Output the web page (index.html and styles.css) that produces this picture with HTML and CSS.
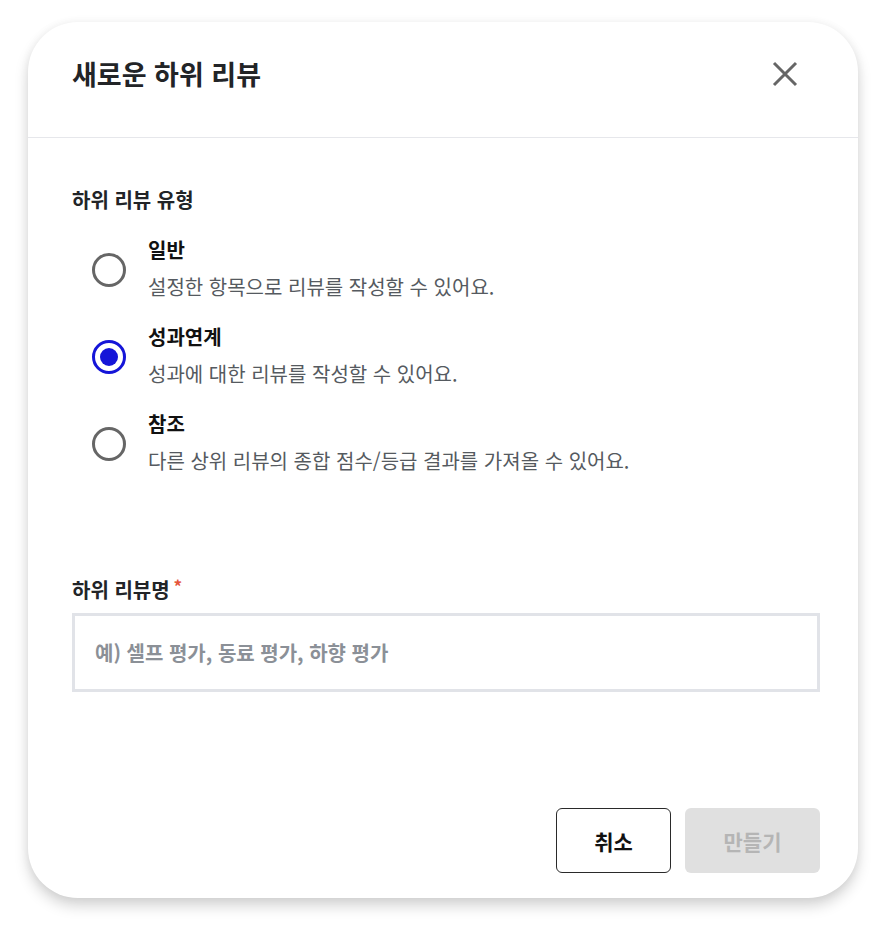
FILE: index.html
```html
<!DOCTYPE html>
<html lang="ko">
<head>
<meta charset="utf-8">
<link rel="stylesheet" href="styles.css">
</head>
<body>
<div class="modal">
  <div class="modal-header">
    <h1 class="title">새로운 하위 리뷰</h1>
    <button class="close" aria-label="닫기">
      <svg width="26" height="26" viewBox="0 0 26 26"><path d="M2 2 L24 24 M24 2 L2 24" stroke="#666" stroke-width="3" stroke-linecap="butt" fill="none"/></svg>
    </button>
  </div>
  <div class="modal-body">
    <div class="label">하위 리뷰 유형</div>
    <div class="options">
      <div class="option">
        <span class="radio"></span>
        <div class="opt-text">
          <div class="opt-title">일반</div>
          <div class="opt-desc">설정한 항목으로 리뷰를 작성할 수 있어요.</div>
        </div>
      </div>
      <div class="option">
        <span class="radio checked"></span>
        <div class="opt-text">
          <div class="opt-title">성과연계</div>
          <div class="opt-desc">성과에 대한 리뷰를 작성할 수 있어요.</div>
        </div>
      </div>
      <div class="option">
        <span class="radio"></span>
        <div class="opt-text">
          <div class="opt-title">참조</div>
          <div class="opt-desc">다른 상위 리뷰의 종합 점수/등급 결과를 가져올 수 있어요.</div>
        </div>
      </div>
    </div>
    <div class="label field-label">하위 리뷰명<span class="req">*</span></div>
    <div class="input"><span class="placeholder">예) 셀프 평가, 동료 평가, 하향 평가</span></div>
    <div class="footer">
      <button class="btn btn-cancel">취소</button>
      <button class="btn btn-create">만들기</button>
    </div>
  </div>
</div>
</body>
</html>
```

FILE: styles.css
```css
* { box-sizing: border-box; }
html, body { margin: 0; padding: 0; background: #fff; }
body {
  font-family: "Noto Sans CJK KR", "Noto Sans", sans-serif;
  padding: 22px 28px;
  width: 886px;
  height: 934px;
  overflow: hidden;
}
.modal {
  width: 830px;
  height: 876px;
  background: #fff;
  border-radius: 50px;
  box-shadow: 0 8px 14px rgba(0,0,0,0.17), 0 0 10px rgba(0,0,0,0.05);
  display: flex;
  flex-direction: column;
}
.modal-header {
  height: 116px;
  border-bottom: 1px solid #e6e7eb;
  display: flex;
  align-items: center;
  justify-content: space-between;
  padding: 0 60px 0 44px;
  flex-shrink: 0;
}
.title {
  margin: 0;
  font-size: 27px;
  font-weight: 700;
  color: #222427;
  line-height: 34px;
  position: relative;
  top: -6px;
}
.close {
  border: 0;
  background: none;
  padding: 0;
  width: 26px;
  height: 26px;
  position: relative;
  top: -6px;
}
.modal-body {
  flex: 1;
  display: flex;
  flex-direction: column;
  padding: 49px 38px 25px 44px;
}
.label {
  font-size: 20px;
  font-weight: 700;
  color: #222427;
  line-height: 26px;
}
.options {
  display: flex;
  flex-direction: column;
  gap: 22px;
  margin-top: 23px;
  padding-left: 20px;
}
.option {
  display: flex;
  align-items: center;
  gap: 22px;
}
.radio {
  width: 34px;
  height: 34px;
  border: 3px solid #666;
  border-radius: 50%;
  flex-shrink: 0;
  display: flex;
  align-items: center;
  justify-content: center;
  position: relative;
  top: 1px;
}
.radio.checked {
  border-color: #1515d8;
}
.radio.checked::after {
  content: "";
  width: 18px;
  height: 18px;
  border-radius: 50%;
  background: #1515d8;
}
.opt-title {
  font-size: 20px;
  font-weight: 700;
  color: #111;
  line-height: 28px;
}
.opt-desc {
  font-size: 20px;
  color: #555a60;
  line-height: 28px;
  margin-top: 9px;
}
.field-label {
  margin-top: 102px;
}
.req {
  color: #e5553b;
  font-size: 17px;
  vertical-align: top;
  margin-left: 4px;
  line-height: 18px;
}
.input {
  margin-top: 10px;
  height: 79px;
  border: 3px solid #e1e3e8;
  display: flex;
  align-items: center;
  padding-left: 20px;
}
.placeholder {
  font-size: 20px;
  font-weight: 700;
  color: #8b9097;
}
.footer {
  margin-top: auto;
  display: flex;
  justify-content: flex-end;
  gap: 14px;
}
.btn {
  height: 65px;
  font-family: inherit;
  font-size: 21px;
  font-weight: 700;
  border-radius: 6px;
}
.btn-cancel {
  width: 115px;
  background: #fff;
  border: 1px solid #2a2a2a;
  color: #111;
}
.btn-create {
  width: 135px;
  background: #e0e0e0;
  border: 0;
  color: #b5b5b5;
}
```
